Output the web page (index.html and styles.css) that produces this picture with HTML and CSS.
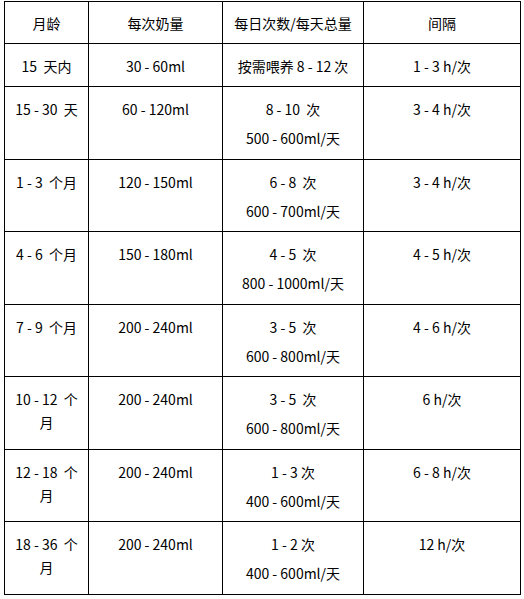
FILE: index.html
```html
<!DOCTYPE html>
<html lang="zh">
<head>
<meta charset="utf-8">
<title>喂奶量参考表</title>
<link rel="stylesheet" href="styles.css">
</head>
<body>
<table class="feed">
  <colgroup>
    <col class="c1"><col class="c2"><col class="c3"><col class="c4">
  </colgroup>
  <thead>
    <tr class="head">
      <th>月龄</th>
      <th>每次奶量</th>
      <th>每日次数/每天总量</th>
      <th>间隔</th>
    </tr>
  </thead>
  <tbody>
    <tr class="single">
      <td>15&nbsp; 天内</td>
      <td>30 - 60ml</td>
      <td>按需喂养 8 - 12 次</td>
      <td>1 - 3 h/次</td>
    </tr>
    <tr>
      <td>15 - 30&nbsp; 天</td>
      <td>60 - 120ml</td>
      <td><p>8 - 10&nbsp; 次</p><p>500 - 600ml/天</p></td>
      <td>3 - 4 h/次</td>
    </tr>
    <tr>
      <td>1 - 3&nbsp; 个月</td>
      <td>120 - 150ml</td>
      <td><p>6 - 8&nbsp; 次</p><p>600 - 700ml/天</p></td>
      <td>3 - 4 h/次</td>
    </tr>
    <tr>
      <td>4 - 6&nbsp; 个月</td>
      <td>150 - 180ml</td>
      <td><p>4 - 5&nbsp; 次</p><p>800 - 1000ml/天</p></td>
      <td>4 - 5 h/次</td>
    </tr>
    <tr>
      <td>7 - 9&nbsp; 个月</td>
      <td>200 - 240ml</td>
      <td><p>3 - 5&nbsp; 次</p><p>600 - 800ml/天</p></td>
      <td>4 - 6 h/次</td>
    </tr>
    <tr>
      <td>10 - 12&nbsp; 个<br>月</td>
      <td>200 - 240ml</td>
      <td><p>3 - 5&nbsp; 次</p><p>600 - 800ml/天</p></td>
      <td>6 h/次</td>
    </tr>
    <tr>
      <td>12 - 18&nbsp; 个<br>月</td>
      <td>200 - 240ml</td>
      <td><p>1 - 3 次</p><p>400 - 600ml/天</p></td>
      <td>6 - 8 h/次</td>
    </tr>
    <tr>
      <td>18 - 36&nbsp; 个<br>月</td>
      <td>200 - 240ml</td>
      <td><p>1 - 2 次</p><p>400 - 600ml/天</p></td>
      <td>12 h/次</td>
    </tr>
  </tbody>
</table>
</body>
</html>
```

FILE: styles.css
```css
html, body {
  margin: 0;
  padding: 0;
  background: #fff;
}

body {
  font-family: "Noto Sans CJK SC", "Noto Sans", sans-serif;
  font-size: 14px;
  color: #000;
}

.feed {
  margin: 1px 0 0 4px;
  border-collapse: collapse;
  table-layout: fixed;
  width: 516px;
}

.c1 { width: 84px; }
.c2 { width: 134px; }
.c3 { width: 141px; }
.c4 { width: 157px; }

.feed th,
.feed td {
  border: 1px solid #000;
  text-align: center;
  vertical-align: top;
  font-weight: normal;
  line-height: 23px;
  padding: 11px 2px 0;
  box-sizing: border-box;
}

.feed tbody tr {
  height: 72.5px;
}

.feed tr.head {
  height: 42px;
}

.feed tr.head th {
  padding-top: 10px;
}

.feed tbody tr.single {
  height: 43px;
}

.feed p {
  margin: 0;
}

.feed p + p {
  margin-top: 6px;
}
```
